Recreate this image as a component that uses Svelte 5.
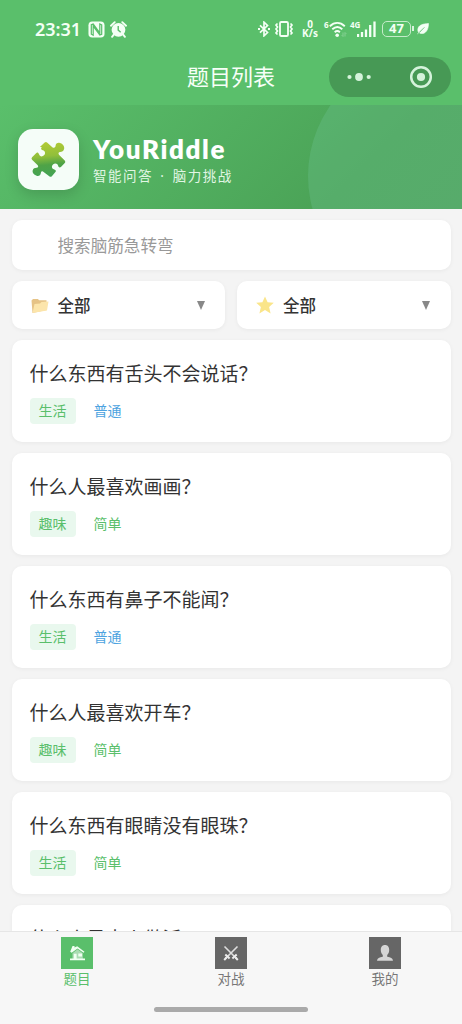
<script>
	const riddles = [
		{ title: "什么东西有舌头不会说话？", category: "生活", level: "普通" },
		{ title: "什么人最喜欢画画？", category: "趣味", level: "简单" },
		{ title: "什么东西有鼻子不能闻？", category: "生活", level: "普通" },
		{ title: "什么人最喜欢开车？", category: "趣味", level: "简单" },
		{ title: "什么东西有眼睛没有眼珠？", category: "生活", level: "简单" },
		{ title: "什么人是大火做活？", category: "生活", level: "简单" },
	];

	const tabs = [
		{ label: "题目", icon: "home" },
		{ label: "对战", icon: "swords" },
		{ label: "我的", icon: "user" },
	];

	let activeTab = $state("home");
	let keyword = $state("");
</script>

<div class="phone">
	<div class="status-bar">
		<span class="clock">23:31</span>
		<svg class="nfc" viewBox="0 0 18 18" width="17" height="17">
			<rect x="0.5" y="0.5" width="17" height="17" rx="4" fill="#f4fff5" />
			<path d="M5.5 15 3.5 14V4l2-.8 7 9.3V3.2l2 1V14l-2 .8-7-9.3z" fill="none" stroke="#5abf6b" stroke-width="1.3" />
		</svg>
		<svg class="alarm" viewBox="0 0 18 18" width="17" height="17">
			<circle cx="9" cy="9.3" r="7.3" fill="#f4fff5" />
			<path d="M1 5 5 1.2M17 5l-4-3.8M4 14.5l-1.8 2.3M14 14.5l1.8 2.3" stroke="#f4fff5" stroke-width="2" stroke-linecap="round" />
			<path d="M8.7 5.3v4.4l2.6 2.2" fill="none" stroke="#5abf6b" stroke-width="1.5" />
		</svg>
		<div class="signals">
			<svg viewBox="0 0 12 16" width="12" height="16">
				<path d="m2 4.3 7.5 7.2L6 14.8V1.2l3.5 3.3L2 11.7" fill="none" stroke="#f4fff5" stroke-width="1.7" />
				<path d="M0 8h2M10 8h2" stroke="#f4fff5" stroke-width="1.8" />
			</svg>
			<svg class="vibrate" viewBox="0 0 20 16" width="20" height="16">
				<rect x="6" y="1" width="8" height="14" rx="1.3" fill="none" stroke="#f4fff5" stroke-width="1.8" />
				<path d="M3.5 2.5 2 4l1.5 2L2 8l1.5 2L2 12l1.5 1.5M16.5 2.5 18 4l-1.5 2L18 8l-1.5 2 1.5 2-1.5 1.5" fill="none" stroke="#f4fff5" stroke-width="1.7" />
			</svg>
			<span class="speed"><b>0</b><b>K/s</b></span>
			<span class="small-label">6</span>
			<svg class="wifi" viewBox="4 0 18 18" width="18" height="18">
				<path d="M4.8 6.2c4.6-4.2 10.400-4.200 15 0M7.300 9.300c3.200-2.900 6.900-2.900 10 0M9.700 12.200c1.700-1.500 3.500-1.500 5.200 0" fill="none" stroke="#f4fff5" stroke-width="1.9" />
				<circle cx="12.200" cy="15.200" r="1.800" fill="#f4fff5" />
				<path d="M18 12.500v4l-1.300-1.300M20 16.500v-4l1.300 1.300" fill="none" stroke="#8bd497" stroke-width="0.900" />
			</svg>
			<span class="small-label network">4G</span>
			<svg class="cell" viewBox="6 0 19 18" width="19" height="18">
				<path d="M7 17v-3M11 17v-5M15 17V9.500M19.200 17V5M23.500 17V1.500" stroke="#f4fff5" stroke-width="2.300" />
			</svg>
			<span class="battery">47</span>
			<svg class="leaf" viewBox="0 0 12 12" width="12" height="12">
				<path d="M11.500.5C6 .8 1 2 .8 6.800c0 1.200.4 2 .8 2.600L7 4.300 2.500 10c4.500 2 9-1.500 9-9.500zM1.800 9.300.3 11.300" fill="#f4fff5" stroke="#f4fff5" stroke-width="0.600" />
				<path d="M2.500 9.300 7.500 4.300" stroke="#5abf6b" stroke-width="0.700" />
			</svg>
		</div>
	</div>

	<header class="nav-bar">
		<h1>题目列表</h1>
		<div class="capsule">
			<svg viewBox="0 0 24 10" width="24" height="10" fill="#d5f3db">
				<circle cx="2.500" cy="5" r="2.100" />
				<circle cx="12" cy="5" r="3.900" />
				<circle cx="21.700" cy="5" r="2.100" />
			</svg>
			<svg viewBox="0 0 24 24" width="24" height="24">
				<circle cx="12" cy="12" r="9.800" fill="none" stroke="#d5f3db" stroke-width="2.500" />
				<circle cx="12" cy="12" r="4.100" fill="#d5f3db" />
			</svg>
		</div>
	</header>

	<section class="banner">
		<div class="logo">
			<svg viewBox="0 0 60 60" width="61" height="61">
				<defs>
					<linearGradient id="puzzle" x1="0.45" y1="0" x2="0.55" y2="1">
						<stop offset="0" stop-color="#b2cb35" />
						<stop offset="0.4" stop-color="#91bf3b" />
						<stop offset="0.65" stop-color="#4fa347" />
						<stop offset="1" stop-color="#43a456" />
					</linearGradient>
				</defs>
				<path d="M21 17.500 26 12.800q1.300-.8 2.500 0l5.500 5c1.800 1.300 3.300.2 3.400-1.500.1-2.500 2.300-3.500 4.500-2.900 3 .7 5 3.300 4.500 6.100-.5 2.400-2.300 3.200-4.200 3.400-1.800.2-2.300 1.500-1 3.100l5.800 5.600q1.300 1.600 0 2.800l-4 4.200c-1.400 1-2.500.3-2.900-1.300-.7-2.800-3.500-3.200-5.400-1.400-1.900 2-1.300 4.400 1.300 5.200 1.900.6 2.300 1.700 1 2.900l-3.500 4.200q-1.300 1.200-2.700 0l-5.900-4.600c-1.500-1.200-2.700-.4-2.900 1.200-.3 2.500-2.200 3.500-4.400 2.800-2.900-.8-4.800-3-4.100-5.600.5-2.200 2.300-2.600 4-2.700 1.800-.2 2.300-1.600 1-3l-5.700-5.300q-1.200-1.500 0-2.700l4.200-4.300c1.300-1.200 2.500-.5 3 1 .8 2.700 3.300 3.100 5.300 1.300 1.900-1.900 1.400-4.600-1.300-5.400-1.800-.5-2.300-1.900-1-3.400z" transform="translate(1.800 1.200) scale(0.94)" fill="url(#puzzle)" />
			</svg>
		</div>
		<div class="brand">
			<strong>YouRiddle</strong>
			<span>智能问答 · 脑力挑战</span>
		</div>
	</section>

	<main class="content">
		<input class="search" type="text" placeholder="搜索脑筋急转弯" bind:value={keyword} />

		<div class="filters">
			<div class="filter">
				<svg viewBox="0 0 18 18" width="18" height="18">
					<path d="M.5 4.500 2 3h5l1 1.200h7.500V14L1.500 17z" fill="#e6c386" />
					<path d="M3.500 8 9 7.500l1.500-1.500 7-.5L16 14.500 1.500 17z" fill="#fce5ab" />
				</svg>
				<span>全部</span>
				<i class="arrow"></i>
			</div>
			<div class="filter">
				<svg viewBox="0 0 18 18" width="18" height="18">
					<path d="m9 .4 2.600 5.900 6.200.5-4.700 4.200 1.500 6.400L9 14l-5.600 3.400L4.900 11 .2 6.800l6.200-.5z" fill="#fae58a" />
				</svg>
				<span>全部</span>
				<i class="arrow"></i>
			</div>
		</div>

		{#each riddles as riddle}
			<article class="card">
				<h2>{riddle.title}</h2>
				<div class="tags">
					<span class="tag">{riddle.category}</span>
					<span class="level" class:normal={riddle.level === "普通"}>{riddle.level}</span>
				</div>
			</article>
		{/each}
	</main>

	<nav class="tab-bar">
		<div class="tabs">
			{#each tabs as tab}
				<button class:active={activeTab === tab.icon} onclick={() => (activeTab = tab.icon)}>
					<svg viewBox="0 0 32 32" width="32" height="32">
						{#if tab.icon === "home"}
							<path d="M9.200 14.800 11.500 9h2v1.500l2.700-1.300L23.500 14.800l-1 1-6-4.400-5.800 4.400z" fill="#f0fff2" />
							<path d="M11.500 16.200 16.500 12.300 21.800 16.200V22H11.500z" fill="#a9dcb2" />
							<path d="M12.800 16.800h2.800V22h-2.800zM17.300 16.500h3.700v3h-3.700zM9 21.500h15v1.700H9z" fill="#f0fff2" />
						{:else if tab.icon === "swords"}
							<path d="m9.500 9.500 12 12M22.500 9.500l-12 12" stroke="#dedede" stroke-width="1.600" />
							<path d="m10.300 17.500 4.300 4M21.700 17.500l-4.300 4M11.500 20.500l-2.300 2.500M20.500 20.500l2.300 2.500" stroke="#ededed" stroke-width="2" />
						{:else}
							<path d="M16 8c3 0 4.200 2.200 4.200 5 0 2.300-.8 4-2 5v1.700c3.500.5 5.500 1.300 5.800 4H8c.3-2.700 2.300-3.500 5.800-4V18c-1.200-1-2-2.700-2-5 0-2.800 1.200-5 4.200-5z" fill="#d5d5d5" />
						{/if}
					</svg>
					<span>{tab.label}</span>
				</button>
			{/each}
		</div>
		<div class="home-indicator"></div>
	</nav>
</div>

<style>
	:global(body) {
		margin: 0;
	}

	.phone {
		display: flex;
		flex-direction: column;
		width: 462px;
		height: 1024px;
		overflow: hidden;
		background: #f4f4f4;
		font-family: "Noto Sans CJK SC", sans-serif;
		color: #333;
	}

	.status-bar {
		flex: none;
		display: flex;
		align-items: center;
		box-sizing: border-box;
		height: 50px;
		padding: 8px 33px 0 35px;
		background: #5abf6b;
		color: #f4fff5;
	}

	.clock {
		width: 53px;
		font: 600 18px "Noto Sans", sans-serif;
		white-space: nowrap;
	}

	.alarm {
		margin-left: 5px;
	}

	.signals {
		display: flex;
		align-items: center;
		margin-left: auto;
		font-family: "Noto Sans", sans-serif;
	}

	.vibrate {
		margin-left: 4px;
	}

	.speed {
		display: flex;
		flex-direction: column;
		align-items: center;
		width: 18px;
		margin-left: 7px;
		font-size: 10px;
		line-height: 9px;
	}

	.small-label {
		align-self: flex-start;
		width: 5px;
		margin-left: 5px;
		font-size: 8px;
		font-weight: 700;
		line-height: 9px;
	}

	.network {
		width: 11px;
		margin-left: 3px;
	}

	.cell {
		margin-left: -4px;
	}

	.battery {
		position: relative;
		box-sizing: border-box;
		width: 29px;
		height: 16px;
		margin-left: 6px;
		border: 1.5px solid #c5ecca;
		border-radius: 5px;
		font-size: 13px;
		font-weight: 700;
		line-height: 13px;
		text-align: center;
	}

	.battery::after {
		content: "";
		position: absolute;
		top: 4px;
		right: -4px;
		width: 2px;
		height: 5px;
		background: #d8f3dc;
	}

	.leaf {
		margin-left: 6px;
	}

	.nav-bar {
		flex: none;
		display: grid;
		grid-template-columns: 1fr auto 1fr;
		align-items: center;
		box-sizing: border-box;
		height: 54.5px;
		padding-bottom: 1px;
		background: #5abf6b;
	}

	.nav-bar h1 {
		grid-column: 2;
		margin: 0 0 3px;
		font-size: 22px;
		font-weight: 400;
		line-height: 32px;
		color: #f7fff8;
	}

	.capsule {
		justify-self: end;
		display: flex;
		align-items: center;
		justify-content: space-between;
		box-sizing: border-box;
		width: 122px;
		height: 40px;
		margin-right: 11px;
		padding: 0 18px;
		border-radius: 20px;
		background: #479955;
	}

	.banner {
		position: relative;
		flex: none;
		display: flex;
		align-items: center;
		gap: 14px;
		box-sizing: border-box;
		height: 104px;
		padding: 6px 18px 0;
		overflow: hidden;
		background: linear-gradient(135deg, #5abf6b, #4ba357 75%, #4ca158);
	}

	.banner::before {
		content: "";
		position: absolute;
		top: -52px;
		right: -92px;
		width: 246px;
		height: 246px;
		border-radius: 50%;
		background: rgba(120, 205, 165, 0.25);
	}

	.logo {
		width: 61px;
		height: 61px;
		border-radius: 15px;
		background: #f5fdf8;
		box-shadow: 0 5px 14px rgba(0, 0, 0, 0.15);
	}

	.brand {
		display: flex;
		flex-direction: column;
		margin-top: -2px;
		color: #fff;
	}

	.brand strong {
		font: 800 26px/34px Lato, sans-serif;
		letter-spacing: 1.6px;
	}

	.brand span {
		font-family: "Noto Sans", "Noto Sans CJK SC", sans-serif;
		font-size: 13.5px;
		line-height: 20px;
		letter-spacing: 1.5px;
		word-spacing: 2.3px;
		color: #e1f6e4;
	}

	.content {
		flex: 1;
		display: flex;
		flex-direction: column;
		gap: 11px;
		min-height: 0;
		padding: 11.5px 11.5px 0;
		overflow: hidden;
	}

	.search,
	.filter,
	.card {
		flex: none;
		box-sizing: border-box;
		border-radius: 10px;
		background: #fff;
		box-shadow: 0 1px 4px rgba(0, 0, 0, 0.05);
	}

	.search {
		width: 100%;
		height: 50px;
		padding: 0 46px;
		border: 0;
		outline: none;
		font: 16.6px "Noto Sans CJK SC", sans-serif;
	}

	.search::placeholder {
		color: #999;
		opacity: 1;
	}

	.filters {
		display: grid;
		grid-template-columns: 1fr 1fr;
		gap: 12px;
	}

	.filter {
		display: flex;
		align-items: center;
		gap: 9px;
		height: 48px;
		padding: 0 20.5px 0 19px;
		font-size: 16.5px;
		font-weight: 500;
	}

	.filter span {
		margin-top: -1px;
	}

	.arrow {
		margin-left: auto;
		border: 4.5px solid transparent;
		border-top: 9px solid #888;
		border-bottom: 0;
	}

	.card {
		height: 102px;
		padding: 18px 18px 0;
	}

	.card h2 {
		margin: 0 0 11px;
		font-size: 19px;
		font-weight: 400;
		line-height: 29px;
	}

	.tags {
		display: flex;
		align-items: center;
		font-size: 14px;
		color: #5abf6b;
	}

	.tag {
		box-sizing: border-box;
		width: 46px;
		height: 26px;
		border-radius: 4px;
		background: #e9f8ee;
		line-height: 24px;
		text-align: center;
	}

	.level {
		margin-left: 18px;
		line-height: 24px;
		padding-bottom: 2px;
	}

	.level.normal {
		color: #4da3e0;
	}

	.tab-bar {
		flex: none;
		box-sizing: border-box;
		height: 93px;
		border-top: 1px solid #e6e6e6;
		background: #f7f7f7;
	}

	.tabs {
		display: grid;
		grid-template-columns: repeat(3, 1fr);
		height: 75px;
	}

	.tabs button {
		display: flex;
		flex-direction: column;
		align-items: center;
		padding: 5px 0 0;
		border: 0;
		background: none;
		font: 13.5px/20px "Noto Sans CJK SC", sans-serif;
		color: #777;
	}

	.tabs span {
		margin-top: -1px;
	}

	.tabs svg {
		flex: none;
		background: #666;
	}

	.tabs .active {
		color: #5abf6b;
	}

	.tabs .active svg {
		background: #5abf6b;
	}

	.home-indicator {
		width: 154px;
		height: 5px;
		margin: 0 auto;
		border-radius: 3px;
		background: #aaa;
	}
</style>
